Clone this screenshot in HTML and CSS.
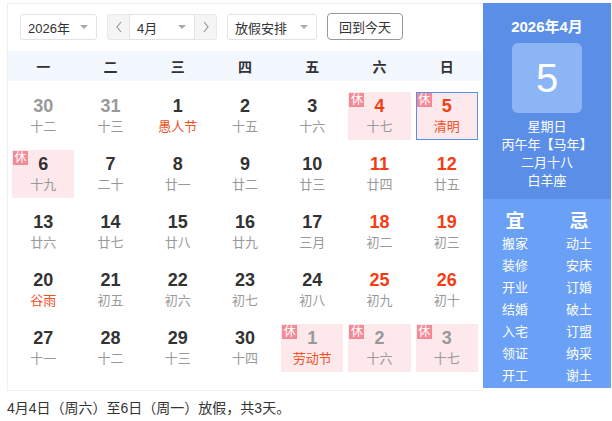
FILE: index.html
```html
<!DOCTYPE html>
<html lang="zh">
<head>
<meta charset="utf-8">
<title>万年历</title>
<link rel="stylesheet" href="styles.css">
</head>
<body>
<div class="wrap">
  <div class="cal">
    <div class="main">
      <div class="toolbar">
        <div class="sel sel-year"><span>2026年</span><i class="caret"></i></div>
        <div class="month-group">
          <div class="arrow"><svg width="8" height="12" viewBox="0 0 8 12"><polyline points="6,1 2,6 6,11" fill="none" stroke="#999" stroke-width="1.2"/></svg></div>
          <div class="sel sel-month"><span>4月</span><i class="caret"></i></div>
          <div class="arrow"><svg width="8" height="12" viewBox="0 0 8 12"><polyline points="2,1 6,6 2,11" fill="none" stroke="#999" stroke-width="1.2"/></svg></div>
        </div>
        <div class="sel sel-hol"><span>放假安排</span><i class="caret"></i></div>
        <div class="btn">回到今天</div>
      </div>
      <div class="week">
        <span>一</span><span>二</span><span>三</span><span>四</span><span>五</span><span>六</span><span>日</span>
      </div>
      <div class="grid">
        <div class="cell other"><b>30</b><em>十二</em></div>
        <div class="cell other"><b>31</b><em>十三</em></div>
        <div class="cell"><b>1</b><em class="fest">愚人节</em></div>
        <div class="cell"><b>2</b><em>十五</em></div>
        <div class="cell"><b>3</b><em>十六</em></div>
        <div class="cell rest wk"><i class="badge">休</i><b>4</b><em>十七</em></div>
        <div class="cell rest wk today"><i class="badge">休</i><b>5</b><em class="fest">清明</em></div>

        <div class="cell rest"><i class="badge">休</i><b>6</b><em>十九</em></div>
        <div class="cell"><b>7</b><em>二十</em></div>
        <div class="cell"><b>8</b><em>廿一</em></div>
        <div class="cell"><b>9</b><em>廿二</em></div>
        <div class="cell"><b>10</b><em>廿三</em></div>
        <div class="cell wk"><b>11</b><em>廿四</em></div>
        <div class="cell wk"><b>12</b><em>廿五</em></div>

        <div class="cell"><b>13</b><em>廿六</em></div>
        <div class="cell"><b>14</b><em>廿七</em></div>
        <div class="cell"><b>15</b><em>廿八</em></div>
        <div class="cell"><b>16</b><em>廿九</em></div>
        <div class="cell"><b>17</b><em>三月</em></div>
        <div class="cell wk"><b>18</b><em>初二</em></div>
        <div class="cell wk"><b>19</b><em>初三</em></div>

        <div class="cell"><b>20</b><em class="fest">谷雨</em></div>
        <div class="cell"><b>21</b><em>初五</em></div>
        <div class="cell"><b>22</b><em>初六</em></div>
        <div class="cell"><b>23</b><em>初七</em></div>
        <div class="cell"><b>24</b><em>初八</em></div>
        <div class="cell wk"><b>25</b><em>初九</em></div>
        <div class="cell wk"><b>26</b><em>初十</em></div>

        <div class="cell"><b>27</b><em>十一</em></div>
        <div class="cell"><b>28</b><em>十二</em></div>
        <div class="cell"><b>29</b><em>十三</em></div>
        <div class="cell"><b>30</b><em>十四</em></div>
        <div class="cell rest other"><i class="badge">休</i><b>1</b><em class="fest">劳动节</em></div>
        <div class="cell rest other"><i class="badge">休</i><b>2</b><em>十六</em></div>
        <div class="cell rest other"><i class="badge">休</i><b>3</b><em>十七</em></div>
      </div>
    </div>
    <div class="side">
      <div class="side-top">
        <div class="ym">2026年4月</div>
        <div class="bigday">5</div>
        <div class="info">
          <p>星期日</p>
          <p>丙午年【马年】</p>
          <p>二月十八</p>
          <p>白羊座</p>
        </div>
      </div>
      <div class="side-bottom">
        <div class="col">
          <h3>宜</h3>
          <p>搬家</p><p>装修</p><p>开业</p><p>结婚</p><p>入宅</p><p>领证</p><p>开工</p>
        </div>
        <div class="col">
          <h3>忌</h3>
          <p>动土</p><p>安床</p><p>订婚</p><p>破土</p><p>订盟</p><p>纳采</p><p>谢土</p>
        </div>
      </div>
    </div>
  </div>
  <div class="note">4月4日（周六）至6日（周一）放假，共3天。</div>
</div>
</body>
</html>
```

FILE: styles.css
```css
* { box-sizing: border-box; }
html, body {
  margin: 0;
  padding: 0;
  background: #fff;
  font-family: "Liberation Sans", "Noto Sans CJK SC", sans-serif;
  color: #333;
}
.wrap {
  padding: 3px 0 0 7px;
}
.cal {
  display: flex;
  gap: 1px;
  width: 604px;
}
.main {
  width: 475px;
  height: 388px;
  border: 1px solid #f0f0f0;
  border-right: none;
}
.toolbar {
  height: 47px;
  display: flex;
  align-items: flex-start;
  gap: 10px;
  padding: 10px 0 0 12px;
}
.sel {
  height: 26px;
  border: 1px solid #e2e2e2;
  border-radius: 3px;
  display: flex;
  align-items: center;
  justify-content: space-between;
  padding: 0 8px 0 7px;
  font-size: 13px;
  color: #333;
  background: #fff;
}
.sel-year { width: 77px; }
.sel-month { width: 66px; border-radius: 0; }
.sel-hol { width: 90px; }
.caret {
  width: 0;
  height: 0;
  border-left: 4px solid transparent;
  border-right: 4px solid transparent;
  border-top: 4px solid #aaa;
}
.month-group {
  display: flex;
  height: 26px;
}
.arrow {
  width: 22px;
  height: 26px;
  background: #f5f5f5;
  border: 1px solid #e8e8e8;
  display: flex;
  align-items: center;
  justify-content: center;
}
.month-group .arrow:first-child { border-radius: 3px 0 0 3px; border-right: none; }
.month-group .arrow:last-child { border-radius: 0 3px 3px 0; border-left: none; }
.btn {
  width: 76px;
  height: 27px;
  margin-top: -1px;
  border: 1px solid #999;
  border-radius: 4px;
  display: flex;
  align-items: center;
  justify-content: center;
  font-size: 13px;
  color: #333;
}
.week {
  height: 30px;
  background: #f3f7fe;
  display: grid;
  grid-template-columns: repeat(7, 1fr);
  padding: 0 1.5px;
  align-items: center;
  text-align: center;
  font-size: 14px;
  font-weight: bold;
  color: #333;
}
.grid {
  display: grid;
  grid-template-columns: repeat(7, 1fr);
  grid-auto-rows: 58px;
  padding: 6px 1.5px 0;
}
.cell {
  position: relative;
  margin: 5px 2.5px;
  display: flex;
  flex-direction: column;
  align-items: center;
  justify-content: center;
  border: 1px solid transparent;
}
.cell b {
  font-size: 18px;
  line-height: 20px;
  font-weight: bold;
  color: #333;
}
.cell em {
  font-style: normal;
  font-size: 13px;
  line-height: 19px;
  color: #999;
  margin-top: 1px;
}
.cell em.fest { color: #f2501e; }
.cell.wk b { color: #f53d14; }
.cell.other b { color: #999; }
.cell.rest { background: #fde8ec; }
.cell.today { border-color: #5b8fe8; }
.badge {
  position: absolute;
  left: 0;
  top: 0;
  width: 15px;
  height: 14px;
  background: #f28b97;
  color: #fff;
  font-style: normal;
  font-size: 12px;
  line-height: 14px;
  text-align: center;
}
.side {
  width: 128px;
  display: flex;
  flex-direction: column;
  color: #fff;
}
.side-top {
  height: 196px;
  background: #5b8fe7;
  display: flex;
  flex-direction: column;
  align-items: center;
  padding-top: 15px;
}
.ym {
  font-size: 15px;
  font-weight: bold;
  line-height: 17px;
}
.bigday {
  margin-top: 8px;
  width: 70px;
  height: 70px;
  border-radius: 6px;
  background: #8cb5f6;
  display: flex;
  align-items: center;
  justify-content: center;
  font-size: 40px;
  font-family: "Liberation Sans", sans-serif;
}
.info {
  margin-top: 5px;
  text-align: center;
  font-size: 13px;
  line-height: 18px;
}
.info p { margin: 0; }
.side-bottom {
  height: 189px;
  background: #6aa1f6;
  display: flex;
  padding-top: 11px;
}
.col {
  flex: 1;
  display: flex;
  flex-direction: column;
  align-items: center;
}
.col h3 {
  margin: 0 0 -1px;
  font-size: 19px;
  line-height: 24px;
  font-weight: bold;
}
.col p {
  margin: 0;
  font-size: 13px;
  line-height: 22px;
}
.note {
  margin-top: 9px;
  font-size: 14px;
  line-height: 16px;
  color: #333;
}
```
